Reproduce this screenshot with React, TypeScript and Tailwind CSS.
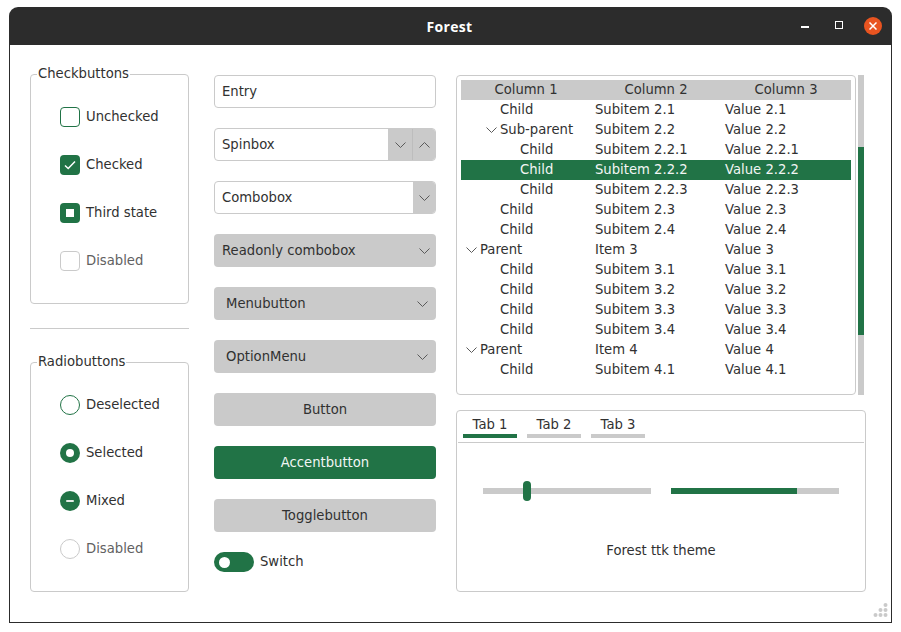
const chevronDown = (
  <svg width="11" height="6" viewBox="0 0 11 6" fill="none" className="shrink-0">
    <path d="M0.5 0.5L5.5 5.5L10.5 0.5" stroke="#5a5a5a" strokeWidth="1" />
  </svg>
);

const chevronUp = (
  <svg width="11" height="6" viewBox="0 0 11 6" fill="none" className="shrink-0">
    <path d="M0.5 5.5L5.5 0.5L10.5 5.5" stroke="#5a5a5a" strokeWidth="1" />
  </svg>
);

const checkItems = [
  { label: 'Unchecked', box: 'border border-[#217346] bg-white', mark: null, disabled: false },
  {
    label: 'Checked',
    box: 'bg-[#217346]',
    mark: (
      <svg width="12" height="10" viewBox="0 0 12 10" fill="none">
        <path d="M1 5.5L4.2 8.5L11 1.5" stroke="white" strokeWidth="1.5" />
      </svg>
    ),
    disabled: false,
  },
  { label: 'Third state', box: 'bg-[#217346]', mark: <div className="w-2 h-2 bg-white" />, disabled: false },
  { label: 'Disabled', box: 'border border-[#cacaca] bg-white', mark: null, disabled: true },
];

const radioItems = [
  { label: 'Deselected', box: 'border border-[#217346] bg-white', mark: null, disabled: false },
  { label: 'Selected', box: 'bg-[#217346]', mark: <div className="w-2 h-2 rounded-full bg-white" />, disabled: false },
  { label: 'Mixed', box: 'bg-[#217346]', mark: <div className="w-2 h-[2px] rounded-full bg-[#e4ece7]" />, disabled: false },
  { label: 'Disabled', box: 'border border-[#cacaca] bg-white', mark: null, disabled: true },
];

type TreeRow = { level: number; name: string; sub: string; value: string; open?: boolean; selected?: boolean };

const treeRows: TreeRow[] = [
  { level: 1, name: 'Child', sub: 'Subitem 2.1', value: 'Value 2.1' },
  { level: 1, name: 'Sub-parent', sub: 'Subitem 2.2', value: 'Value 2.2', open: true },
  { level: 2, name: 'Child', sub: 'Subitem 2.2.1', value: 'Value 2.2.1' },
  { level: 2, name: 'Child', sub: 'Subitem 2.2.2', value: 'Value 2.2.2', selected: true },
  { level: 2, name: 'Child', sub: 'Subitem 2.2.3', value: 'Value 2.2.3' },
  { level: 1, name: 'Child', sub: 'Subitem 2.3', value: 'Value 2.3' },
  { level: 1, name: 'Child', sub: 'Subitem 2.4', value: 'Value 2.4' },
  { level: 0, name: 'Parent', sub: 'Item 3', value: 'Value 3', open: true },
  { level: 1, name: 'Child', sub: 'Subitem 3.1', value: 'Value 3.1' },
  { level: 1, name: 'Child', sub: 'Subitem 3.2', value: 'Value 3.2' },
  { level: 1, name: 'Child', sub: 'Subitem 3.3', value: 'Value 3.3' },
  { level: 1, name: 'Child', sub: 'Subitem 3.4', value: 'Value 3.4' },
  { level: 0, name: 'Parent', sub: 'Item 4', value: 'Value 4', open: true },
  { level: 1, name: 'Child', sub: 'Subitem 4.1', value: 'Value 4.1' },
];

const levelPadding = ['pl-[19px]', 'pl-[39px]', 'pl-[59px]'];

type ChoiceItem = (typeof checkItems)[number];

function ChoiceFrame({ title, items, shape }: { title: string; items: ChoiceItem[]; shape: string }) {
  return (
    <div className="relative h-[230px] rounded border border-[#cacaca] pt-[32px] pl-[29px]">
      <span className="absolute -top-[11px] left-[6px] bg-white px-px leading-[20px]">{title}</span>
      <div className="flex flex-col gap-[28px]">
        {items.map((item) => (
          <div key={item.label} className="flex items-center gap-[6px] h-5">
            <div className={`w-5 h-5 flex items-center justify-center ${shape} ${item.box}`}>{item.mark}</div>
            <span className={`pb-px ${item.disabled ? 'text-[#616161]' : ''}`}>{item.label}</span>
          </div>
        ))}
      </div>
    </div>
  );
}

function GrayBox({ children, className = '' }: { children: React.ReactNode; className?: string }) {
  return <div className={`h-[33px] rounded bg-[#cacaca] flex items-center ${className}`}>{children}</div>;
}

export default function App() {
  return (
    <div
      className="w-[901px] h-[632px] bg-white pt-[7px] pl-[9px] text-[13.2px] text-[#313131]"
      style={{ fontFamily: '"DejaVu Sans", sans-serif' }}
    >
      <div className="relative w-[883px] h-[616px] rounded-t-[9px] overflow-hidden flex flex-col">
        <div className="relative h-[38px] shrink-0 bg-[#2c2c2c] flex items-center justify-center">
          <span
            className="text-white text-[14px] font-bold tracking-[0.3px] -ml-[2px]"
            style={{ fontFamily: '"Open Sans", sans-serif' }}
          >
            Forest
          </span>
          <div className="absolute right-[10px] top-[10px] flex items-center">
            <div className="w-2 h-[2px] bg-white mt-[2px]" />
            <div className="w-2 h-2 border border-white ml-[26px] -mt-[2px]" />
            <div className="w-[18px] h-[18px] rounded-full bg-[#e95420] flex items-center justify-center ml-[21px]">
              <svg width="8" height="8" viewBox="0 0 8 8" fill="none">
                <path d="M0.5 0.5L7.5 7.5M7.5 0.5L0.5 7.5" stroke="white" strokeWidth="1.5" />
              </svg>
            </div>
          </div>
        </div>

        <div className="flex-1 border-x border-b border-[#2c2c2c] pl-5 pt-[29px] flex">
          <div className="w-[159px] shrink-0">
            <ChoiceFrame title="Checkbuttons" items={checkItems} shape="rounded" />
            <div className="h-px bg-[#cacaca] mt-6 mb-[33px]" />
            <ChoiceFrame title="Radiobuttons" items={radioItems} shape="rounded-full" />
          </div>

          <div className="w-[222px] ml-[25px] mt-px shrink-0 flex flex-col gap-5">
            <div className="h-[33px] rounded border border-[#cacaca] pl-[7px] flex items-center">Entry</div>

            <div className="h-[33px] rounded border border-[#cacaca] flex items-stretch overflow-hidden">
              <span className="flex-1 pl-[7px] flex items-center">Spinbox</span>
              <div className="w-6 -my-px bg-[#cacaca] flex items-center justify-center">{chevronDown}</div>
              <div className="w-px -my-px bg-[#bdbdbd]" />
              <div className="w-[23px] -my-px -mr-px bg-[#cacaca] flex items-center justify-center">{chevronUp}</div>
            </div>

            <div className="h-[33px] rounded border border-[#cacaca] flex items-stretch overflow-hidden">
              <span className="flex-1 pl-[7px] flex items-center">Combobox</span>
              <div className="w-[23px] -my-px -mr-px bg-[#cacaca] flex items-center justify-center">{chevronDown}</div>
            </div>

            <GrayBox className="justify-between pl-2 pr-[6px]">
              Readonly combobox
              {chevronDown}
            </GrayBox>
            <GrayBox className="justify-between pl-3 pr-2">
              Menubutton
              {chevronDown}
            </GrayBox>
            <GrayBox className="justify-between pl-3 pr-2">
              OptionMenu
              {chevronDown}
            </GrayBox>
            <GrayBox className="justify-center">Button</GrayBox>
            <div className="h-[33px] rounded bg-[#217346] text-[#f2f6f4] flex items-center justify-center">Accentbutton</div>
            <GrayBox className="justify-center">Togglebutton</GrayBox>

            <div className="flex items-center gap-[6px] h-5">
              <div className="w-10 h-5 rounded-full bg-[#217346] flex items-center pl-[5px]">
                <div className="w-[11px] h-[11px] rounded-full bg-white" />
              </div>
              Switch
            </div>
          </div>

          <div className="w-[410px] ml-5 mt-px shrink-0 flex flex-col gap-[15px]">
            <div className="flex gap-[2px]">
              <div className="w-[400px] h-[320px] rounded border border-[#cacaca] p-1">
                <div className="grid grid-cols-3 h-5 bg-[#cacaca] leading-[19px] text-center">
                  <span>Column 1</span>
                  <span>Column 2</span>
                  <span>Column 3</span>
                </div>
                {treeRows.map((row, i) => (
                  <div
                    key={i}
                    className={`grid grid-cols-3 h-5 leading-[19px] ${row.selected ? 'bg-[#217346] text-[#f2f6f4]' : ''}`}
                  >
                    <div className={`relative ${levelPadding[row.level]}`}>
                      {row.open && (
                        <span className={`absolute top-[7px] ${row.level === 0 ? 'left-[5px]' : 'left-[25px]'}`}>
                          {chevronDown}
                        </span>
                      )}
                      {row.name}
                    </div>
                    <div className="pl-1">{row.sub}</div>
                    <div className="pl-1">{row.value}</div>
                  </div>
                ))}
              </div>
              <div className="w-[6px] h-[320px] bg-[#cacaca] pt-[72px]">
                <div className="h-[188px] bg-[#217346]" />
              </div>
            </div>

            <div className="h-[182px] rounded border border-[#cacaca] pt-[3px]">
              <div className="flex gap-[10px] pl-[6px]">
                {['Tab 1', 'Tab 2', 'Tab 3'].map((tab, i) => (
                  <div key={tab} className="w-[54px] text-center">
                    <div className="h-5 leading-[21px]">{tab}</div>
                    <div className={`h-1 ${i === 0 ? 'bg-[#217346]' : 'bg-[#cacaca]'}`} />
                  </div>
                ))}
              </div>
              <div className="h-px bg-[#cacaca] mt-1 mx-px" />
              <div className="flex items-center gap-5 px-[26px] mt-[38px] h-5">
                <div className="relative w-[168px] h-[6px] bg-[#cacaca]">
                  <div className="absolute left-10 -top-[7px] w-2 h-5 rounded-full bg-[#217346]" />
                </div>
                <div className="w-[168px] h-[6px] bg-[#cacaca]">
                  <div className="w-[126px] h-[6px] bg-[#217346]" />
                </div>
              </div>
              <div className="text-center mt-[40px] leading-5">Forest ttk theme</div>
            </div>
          </div>
        </div>

        <svg width="16" height="16" viewBox="0 0 16 16" className="absolute right-[4px] bottom-[5px]" fill="#cacaca">
          <circle cx="13.5" cy="3" r="2" />
          <circle cx="8.5" cy="8" r="2" />
          <circle cx="13.5" cy="8" r="2" />
          <circle cx="3.5" cy="13" r="2" />
          <circle cx="8.5" cy="13" r="2" />
          <circle cx="13.5" cy="13" r="2" />
        </svg>
      </div>
    </div>
  );
}
